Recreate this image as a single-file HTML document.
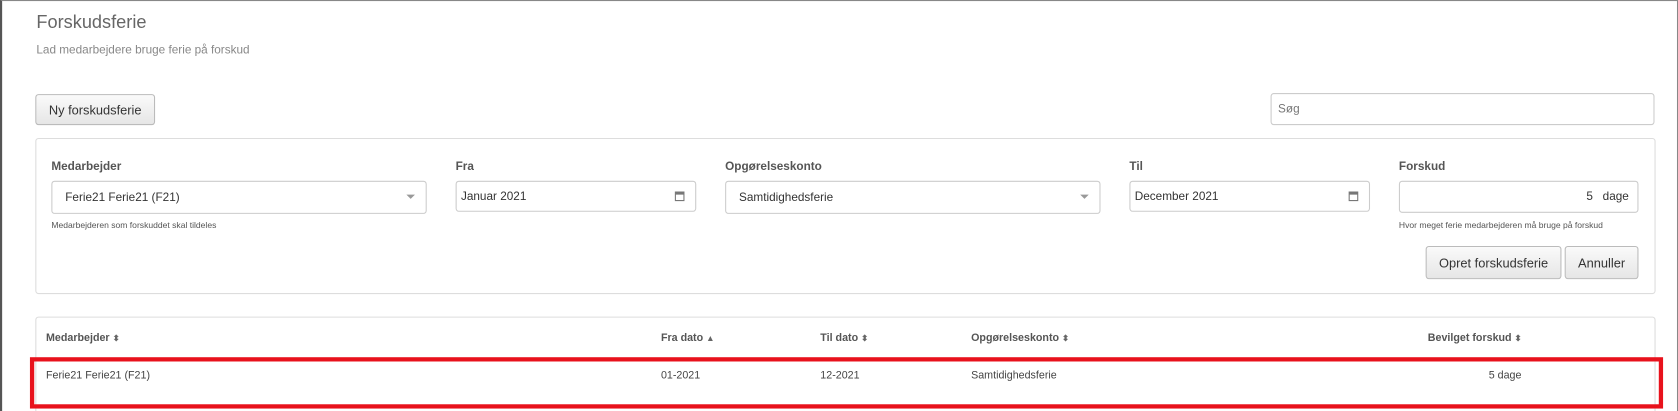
<!DOCTYPE html>
<html><head><meta charset="utf-8"><style>
*{box-sizing:border-box;margin:0;padding:0}
html,body{width:1678px;height:411px;overflow:hidden;background:#fff}
#w{width:1569px;height:385px;transform:scale(1.0695);transform-origin:0 0;font-family:"Liberation Sans",sans-serif;color:#333;position:relative;border-top:1px solid #888;border-left:2px solid #555;border-right:1px solid #888}
.a{position:absolute}
.t{font-size:17px;color:#666;left:32px;top:10px}
.s{font-size:11px;color:#888;left:32px;top:40px}
.btn{position:absolute;border:1px solid #bbb;border-radius:3px;background:linear-gradient(#fafafa,#e6e6e6);font-size:12px;color:#333;display:flex;align-items:center;justify-content:center}
.inp{position:absolute;border:1px solid #ccc;border-radius:3px;background:#fff;font-size:11px;color:#333;display:flex;align-items:center;padding-left:6px}
.card{position:absolute;border:1px solid #ddd;border-radius:3px}
.lbl{position:absolute;font-size:11px;font-weight:bold;color:#555}
.help{position:absolute;font-size:8px;color:#555}
.car{position:absolute;right:10px;top:12px;width:0;height:0;border-left:4px solid transparent;border-right:4px solid transparent;border-top:4px solid #999}
.cal{position:absolute;right:10px;top:9px;width:9px;height:9px;border:1px solid #777;border-top-width:3px}
.th{position:absolute;font-size:10px;font-weight:bold;color:#555;top:310px}
.td{position:absolute;font-size:10px;color:#444;top:345px}
.so{font-size:8px;color:#666}
</style></head><body><div id="w">
<div class="a t">Forskudsferie</div>
<div class="a s">Lad medarbejdere bruge ferie på forskud</div>
<div class="btn" style="left:31px;top:87px;width:112px;height:29px">Ny forskudsferie</div>
<div class="inp" style="left:1186px;top:86px;width:359px;height:30px;color:#777">Søg</div>
<div class="card" style="left:31px;top:128px;width:1515px;height:146px"></div>
<div class="lbl" style="left:46px;top:149px">Medarbejder</div>
<div class="inp" style="left:46px;top:168px;width:351px;height:31px;padding-left:12px">Ferie21 Ferie21 (F21)<span class="car"></span></div>
<div class="help" style="left:46px;top:205px">Medarbejderen som forskuddet skal tildeles</div>
<div class="lbl" style="left:424px;top:149px">Fra</div>
<div class="inp" style="left:424px;top:168px;width:225px;height:29px;padding-left:4px">Januar 2021<span class="cal"></span></div>
<div class="lbl" style="left:676px;top:149px">Opgørelseskonto</div>
<div class="inp" style="left:676px;top:168px;width:351px;height:31px;padding-left:12px">Samtidighedsferie<span class="car"></span></div>
<div class="lbl" style="left:1054px;top:149px">Til</div>
<div class="inp" style="left:1054px;top:168px;width:225px;height:29px;padding-left:4px">December 2021<span class="cal"></span></div>
<div class="lbl" style="left:1306px;top:149px">Forskud</div>
<div class="inp" style="left:1306px;top:168px;width:224px;height:30px;justify-content:flex-end;padding-right:8px;font-size:11px">5&nbsp;&nbsp;&nbsp;dage</div>
<div class="help" style="left:1306px;top:205px">Hvor meget ferie medarbejderen må bruge på forskud</div>
<div class="btn" style="left:1331px;top:229px;width:127px;height:31px">Opret forskudsferie</div>
<div class="btn" style="left:1461px;top:229px;width:69px;height:31px">Annuller</div>
<div class="card" style="left:31px;top:295px;width:1515px;height:100px"></div>
<div class="th" style="left:41px">Medarbejder <span class="so">⬍</span></div>
<div class="th" style="left:616px">Fra dato <span class="so">▲</span></div>
<div class="th" style="left:765px">Til dato <span class="so">⬍</span></div>
<div class="th" style="left:906px">Opgørelseskonto <span class="so">⬍</span></div>
<div class="th" style="left:1333px">Bevilget forskud <span class="so">⬍</span></div>
<div class="a" style="left:26px;top:333px;width:1527px;height:48px;border:4px solid #e8121c"></div>
<div class="td" style="left:41px">Ferie21 Ferie21 (F21)</div>
<div class="td" style="left:616px">01-2021</div>
<div class="td" style="left:765px">12-2021</div>
<div class="td" style="left:906px">Samtidighedsferie</div>
<div class="td" style="left:1390px">5 dage</div>
</div></body></html>
